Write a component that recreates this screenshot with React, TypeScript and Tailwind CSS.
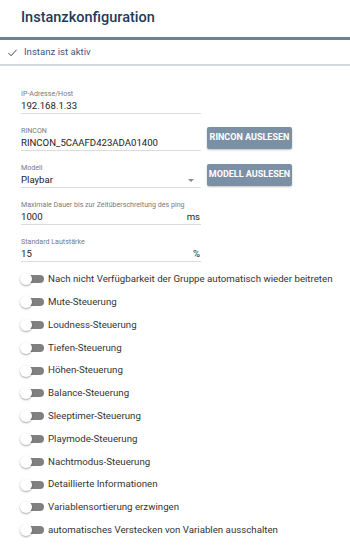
const fields = [
  { label: "IP-Adresse/Host", value: "192.168.1.33" },
  { label: "RINCON", value: "RINCON_5CAAFD423ADA01400", button: "RINCON AUSLESEN" },
  { label: "Modell", value: "Playbar", button: "MODELL AUSLESEN", select: true },
  { label: "Maximale Dauer bis zur Zeitüberschreitung des ping", value: "1000", unit: "ms" },
  { label: "Standard Lautstärke", value: "15", unit: "%" },
];

const toggles = [
  "Nach nicht Verfügbarkeit der Gruppe automatisch wieder beitreten",
  "Mute-Steuerung",
  "Loudness-Steuerung",
  "Tiefen-Steuerung",
  "Höhen-Steuerung",
  "Balance-Steuerung",
  "Sleeptimer-Steuerung",
  "Playmode-Steuerung",
  "Nachtmodus-Steuerung",
  "Detaillierte Informationen",
  "Variablensortierung erzwingen",
  "automatisches Verstecken von Variablen ausschalten",
];

export default function App() {
  return (
    <div className="w-[350px] h-[548px] overflow-hidden bg-white font-['Roboto',sans-serif]">
      {/* Header */}
      <div className="h-[37px] flex items-center pl-[21px]">
        <h1 className="text-[14.5px] font-medium text-[#1d3a5c] leading-none">Instanzkonfiguration</h1>
      </div>
      <div className="h-[3px] bg-[#6c8096]" />
      <div className="h-[26px] flex items-center pl-[7px] gap-[6px] border-b-2 border-[#d3d9df]">
        <svg className="w-[11px] h-[11px]" viewBox="0 0 24 24" fill="none" stroke="#1d3a5c" strokeWidth={2}>
          <path d="M3 13l6 6L21 6" />
        </svg>
        <span className="text-[9.6px] text-[#3c5a7d]">Instanz ist aktiv</span>
      </div>

      {/* Form */}
      <div className="pl-[21px] pt-[22px] flex flex-col gap-[11px]">
        {fields.map((f, i) => (
          <div key={i} className="flex items-center gap-[6px]">
            <div className="w-[180px] border-b border-[#dcdcdc]">
              <div className="h-[11px] text-[7.1px] leading-[11px] text-[#7a7a7a] whitespace-nowrap">{f.label}</div>
              <div className="h-[14px] flex items-center justify-between text-[9.6px] text-[#222] leading-none">
                <span>{f.value}</span>
                {f.unit && <span className="pr-[1px]">{f.unit}</span>}
                {f.select && (
                  <svg className="w-[6px] h-[3px] mr-[7px]" viewBox="0 0 10 5">
                    <path d="M0 0h10L5 5z" fill="#8a8a8a" />
                  </svg>
                )}
              </div>
            </div>
            {f.button && (
              <button className="w-[85px] h-[22px] rounded-[2px] bg-[#7b8fa5] text-white text-[9px] font-bold shadow-[0_1px_2px_rgba(0,0,0,0.25)] whitespace-nowrap">
                {f.button}
              </button>
            )}
          </div>
        ))}
      </div>

      {/* Toggles */}
      <div className="pt-[6px] flex flex-col">
        {toggles.map((t, i) => (
          <div key={i} className="h-[22.8px] flex items-center pl-[20px]">
            <div className="relative w-[25px] h-[12px] flex items-center">
              <div className="ml-[5px] w-[19px] h-[8px] rounded-full bg-[#808080]" />
              <div className="absolute left-0 top-0 w-[12px] h-[12px] rounded-full bg-white shadow-[0_1px_2px_rgba(0,0,0,0.35)]" />
            </div>
            <span className="ml-[3px] text-[9.7px] text-[#333] whitespace-nowrap">{t}</span>
          </div>
        ))}
      </div>
    </div>
  );
}
